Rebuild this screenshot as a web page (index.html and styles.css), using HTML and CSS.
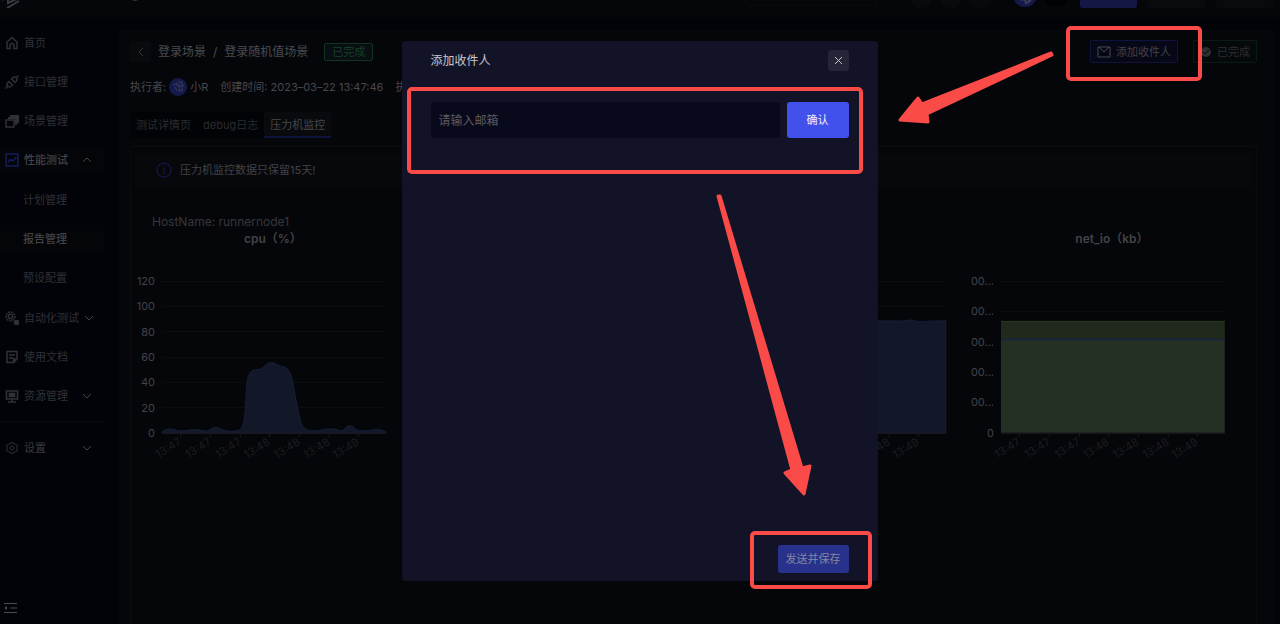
FILE: index.html
```html
<!DOCTYPE html>
<html lang="zh-CN">
<head>
    <meta charset="UTF-8">
    <meta name="viewport" content="width=device-width, initial-scale=1.0">
    <title>压力机监控</title>
    <link rel="stylesheet" href="styles.css">
</head>
<body>
    <header class="topbar">
        <svg class="logo" width="22" height="24" viewBox="0 0 22 24" fill="none">
            <path d="M0 11l4 5" stroke="#1b2068" stroke-width="3"/>
            <path d="M8 8v11l11-5M7 24l12-7" stroke="#3a3b40" stroke-width="2"/>
        </svg>
        <span class="coin"></span>
        <span class="search"></span>
        <div class="tools">
            <span class="dot"></span>
            <span class="dot"></span>
            <span class="dot"></span>
        </div>
        <div class="users">
            <svg class="face" width="25" height="25" viewBox="0 0 25 25">
                <circle cx="12" cy="12" r="12" fill="#151a4d"/>
                <path d="M8 17l4-1 1 5M13 15l4 3-3 2" fill="none" stroke="#3c3e52" stroke-width="2"/>
            </svg>
            <span class="dot black"></span>
        </div>
        <div class="top-actions">
            <span class="block primary"></span>
            <span class="block"></span>
            <span class="block"></span>
        </div>
    </header>

    <div class="layout">
        <nav class="sidebar">
            <a class="item" href="#">
                <svg class="icon" viewBox="0 0 14 14"><path d="M2 6l5-4.500 5 4.500v6.500H9V9.500a2 2 0 0 0-4 0v3H2z"/></svg>
                <span>首页</span>
            </a>
            <a class="item" href="#">
                <svg class="icon" viewBox="0 0 14 14"><path d="M0.500 13.500L2.500 11.500M11.500 2.500l2-2M4 6.500l3.500 3.500-1.200 1.200a2.400 2.400 0 0 1-3.500-3.500zM6.500 4l3.500 3.500 1.200-1.200a2.400 2.400 0 0 0-3.500-3.500z"/></svg>
                <span>接口管理</span>
            </a>
            <a class="item" href="#">
                <svg class="icon" viewBox="0 0 14 14"><path d="M1 6h8v7H1z"/><path d="M3 4h8v7M5 2h8v7" stroke-width="2.200"/></svg>
                <span>场景管理</span>
            </a>
            <a class="item active" href="#">
                <svg class="icon blue" viewBox="0 0 14 14"><path d="M1 1h12v12H1zM3 9.500l2.500-3 2.500 1.500L11.500 4"/></svg>
                <span>性能测试</span>
                <svg class="chevron" viewBox="0 0 10 6"><path d="M1 5l4-4 4 4"/></svg>
            </a>
            <div class="submenu">
                <a class="item sub" href="#">计划管理</a>
                <a class="item sub current" href="#">报告管理</a>
                <a class="item sub" href="#">预设配置</a>
            </div>
            <a class="item" href="#">
                <svg class="icon" viewBox="0 0 14 14"><circle cx="5.500" cy="5.500" r="4.500" stroke-dasharray="2 1"/><circle cx="5.500" cy="5.500" r="2.200"/><circle cx="11.500" cy="11.500" r="2" fill="#303136"/></svg>
                <span>自动化测试</span>
                <svg class="chevron" viewBox="0 0 10 6"><path d="M1 1l4 4 4-4"/></svg>
            </a>
            <a class="item" href="#">
                <svg class="icon" viewBox="0 0 14 14"><path d="M2 1.500h10v7.500l-3.500 3.500H2zM4 5h6M4 8h4M12 9H8.500v3.500" stroke-width="1.600"/></svg>
                <span>使用文档</span>
            </a>
            <a class="item" href="#">
                <svg class="icon" viewBox="0 0 14 14"><path d="M1.500 2h11v8h-11zM7 10v3M3 13h8" stroke-width="1.600"/><path d="M4.500 4.500h5v3h-5z" fill="#303136"/></svg>
                <span>资源管理</span>
                <svg class="chevron" viewBox="0 0 10 6"><path d="M1 1l4 4 4-4"/></svg>
            </a>
            <hr class="divider">
            <a class="item settings" href="#">
                <svg class="icon" viewBox="0 0 14 14"><path d="M7 1.500l5 2.700v5.600L7 12.500 2 9.800V4.200z" stroke-width="1"/><circle cx="7" cy="7" r="2" stroke-width="1"/></svg>
                <span>设置</span>
                <svg class="chevron" viewBox="0 0 10 6"><path d="M1 1l4 4 4-4"/></svg>
            </a>
            <button class="collapse" type="button" aria-label="收起">
                <svg width="14" height="12" viewBox="0 0 14 12"><path d="M0 1.500h13M6 6h7M0 10.500h13" stroke="#4a4a4c"/><path d="M3 4v4L0 6z" fill="#4a4a4c"/></svg>
            </button>
        </nav>

        <main class="main">
            <div class="head">
                <button class="back" type="button" aria-label="返回">
                    <svg width="6" height="10" viewBox="0 0 6 10"><path d="M5 1L1 5l4 4" fill="none" stroke="#36373b"/></svg>
                </button>
                <h1 class="crumbs"><span>登录场景</span><span>/</span><span>登录随机值场景</span></h1>
                <span class="tag">已完成</span>
                <div class="head-actions">
                    <button class="mail" type="button">
                        <svg width="14" height="12" viewBox="0 0 14 12"><path d="M1 1h12v10H1zM2 1l5 5 5-5" fill="none" stroke="#47474d"/></svg>
                        添加收件人
                    </button>
                    <button class="done" type="button">
                        <svg width="12" height="12" viewBox="0 0 12 12"><circle cx="6" cy="6" r="5" fill="#2d2e31"/><path d="M3 6l2 2 4-4" fill="none" stroke="#05060a"/></svg>
                        已完成
                    </button>
                </div>
            </div>
            <div class="meta">
                <span class="runner">执行者:
                    <svg width="18" height="18" viewBox="0 0 18 18"><circle cx="9" cy="9" r="9" fill="#151a4d"/><path d="M4 7l4-2v3M6 9l2 4M9 4h4v3l2 1M9 8h4v5h-3M10 6v7" fill="none" stroke="#3c3e55"/></svg>
                    小R
                </span>
                <span>创建时间: 2023–03–22 13:47:46</span>
                <span>执</span>
            </div>
            <div class="tabs">
                <button class="tab" type="button">测试详情页</button>
                <button class="tab" type="button">debug日志</button>
                <button class="tab selected" type="button">压力机监控</button>
            </div>
            <section class="panel">
                <div class="notice">
                    <svg width="16" height="16" viewBox="0 0 16 16"><circle cx="8" cy="8" r="7" fill="none" stroke="#151b59"/><path d="M8 4v1M8 6v6" stroke="#151b59"/></svg>
                    压力机监控数据只保留15天!
                </div>
                <p class="host">HostName: runnernode1</p>
                <div class="charts">
                    <svg class="chart" viewBox="0 0 280 230">
                        <defs>
                            <g id="times">
                                <path class="axis" d="M28 203.500h224M46.500 204v3M76.500 204v3M106.500 204v3M135.500 204v3M165.500 204v3M195.500 204v3M224.500 204v3"/>
                                <g class="time">
                                    <text transform="translate(48 214) rotate(-32)">13:47</text>
                                    <text transform="translate(78 214) rotate(-32)">13:47</text>
                                    <text transform="translate(108 214) rotate(-32)">13:47</text>
                                    <text transform="translate(137 214) rotate(-32)">13:48</text>
                                    <text transform="translate(167 214) rotate(-32)">13:48</text>
                                    <text transform="translate(197 214) rotate(-32)">13:48</text>
                                    <text transform="translate(226 214) rotate(-32)">13:49</text>
                                </g>
                            </g>
                            <path id="lines" class="grid" d="M28 51.500h224M28 76.500h224M28 101.500h224M28 127.500h224M28 152.500h224M28 177.500h224"/>
                        </defs>
                        <text class="title" x="139" y="13">cpu（%）</text>
                        <use href="#lines"/>
                        <g class="value">
                            <text x="21" y="55">120</text>
                            <text x="21" y="80">100</text>
                            <text x="21" y="106">80</text>
                            <text x="21" y="131">60</text>
                            <text x="21" y="156">40</text>
                            <text x="21" y="182">20</text>
                            <text x="21" y="207">0</text>
                        </g>
                        <path class="area" d="M28 202C32 199 38 198 44 201C52 202 56 199 64 200S72 202 76 200C80 197 84 197 88 200C94 202 100 202 106 200C115 193 109 149 117 142C122 137 124 143 130 137C136 130 140 133 146 136C151 138 153 136 157 145C160 155 160 162 164 178C167 197 170 202 182 201C192 200 198 197 206 201C211 202 211 196 216 196S221 201 226 201C236 202 244 197 252 202V203H28z"/>
                        <use href="#times"/>
                    </svg>
                    <svg class="chart" viewBox="0 0 280 230">
                        <use href="#lines"/>
                        <use href="#times"/>
                    </svg>
                    <svg class="chart" viewBox="0 0 280 230">
                        <use href="#lines"/>
                        <path class="area" d="M28 91H210Q216 89 222 91T236 91H252V203H28z"/>
                        <use href="#times"/>
                    </svg>
                    <svg class="chart" viewBox="0 0 280 230">
                        <text class="title" x="139" y="13">net_io（kb）</text>
                        <path class="grid" d="M28 51.500h224M28 81.500h224"/>
                        <g class="value">
                            <text x="21" y="55">00...</text>
                            <text x="21" y="85">00...</text>
                            <text x="21" y="116">00...</text>
                            <text x="21" y="146">00...</text>
                            <text x="21" y="176">00...</text>
                            <text x="21" y="207">0</text>
                        </g>
                        <path d="M28 91h224v19H28z" fill="#20291b"/>
                        <path d="M28 110h224v93H28z" fill="#233023"/>
                        <path d="M28 91.500h224" stroke="#283a20"/>
                        <path d="M28 109.500h224" stroke="#1a253b" stroke-width="2"/>
                        <use href="#times"/>
                    </svg>
                </div>
            </section>
        </main>
    </div>

    <div class="mask">
        <div class="modal" role="dialog" aria-labelledby="modal-title">
            <div class="modal-head">
                <h2 id="modal-title">添加收件人</h2>
                <button class="close" type="button" aria-label="关闭">
                    <svg width="9" height="9" viewBox="0 0 9 9"><path d="M1 1l7 7M8 1L1 8" stroke="#c4c4ca"/></svg>
                </button>
            </div>
            <form class="mail-form">
                <input type="email" aria-label="邮箱" placeholder="请输入邮箱">
                <button class="confirm" type="button">确认</button>
            </form>
            <button class="send" type="button">发送并保存</button>
        </div>
    </div>

    <!-- guide arrows and frames over the page -->
    <svg class="guide" width="1280" height="624" viewBox="0 0 1280 624">
        <g fill="none" stroke="#fa4b48" stroke-width="4">
            <rect x="1068" y="28" width="132" height="51" rx="3"/>
            <rect x="409" y="89" width="452" height="83" rx="3"/>
            <rect x="752" y="533" width="118" height="54" rx="3"/>
        </g>
        <g fill="#fa4b48" stroke="#fa4b48" stroke-width="3" stroke-linejoin="round">
            <path d="M1051 53L922 104L918 98L900 120L928 122L927 114L1052 55z"/>
            <path d="M718 196L792 470L785 473L804 494L810 466L802 468L720 196z"/>
        </g>
    </svg>
</body>
</html>
```

FILE: styles.css
```css
* {
    box-sizing: border-box;
}
body {
    margin: 0;
    height: 100vh;
    display: flex;
    flex-direction: column;
    overflow: hidden;
    background: #020308;
    color: #424347;
    font-family: Inter, "Noto Sans CJK SC", sans-serif;
    font-size: 11px;
    line-height: 16px;
}
button, input {
    font: inherit;
    color: inherit;
    border: none;
    padding: 0;
    margin: 0;
}
button {
    display: flex;
    align-items: center;
    justify-content: center;
    background: none;
    cursor: pointer;
    white-space: nowrap;
}
a {
    color: inherit;
    text-decoration: none;
}

/* top bar */
.topbar {
    flex: none;
    height: 17px;
    padding: 0 7px 9px 0;
    display: flex;
    align-items: flex-end;
    overflow: hidden;
    background: #05060a;
}
.coin {
    width: 12px;
    height: 12px;
    margin: 0 0 7px 107px;
    border-radius: 50%;
    background: #3a2d18;
}
.search {
    width: 132px;
    height: 28px;
    margin-left: auto;
    margin-bottom: 2px;
    border: 1px solid #0a0b0f;
    border-radius: 3px;
}
.tools {
    display: flex;
    gap: 6px;
    margin-left: 32px;
}
.users {
    display: flex;
    gap: 6px;
    margin-left: 20px;
}
.dot {
    width: 24px;
    height: 24px;
    border-radius: 50%;
    background: #090a0e;
}
.black {
    background: #010205;
}
.top-actions {
    display: flex;
    gap: 11px;
    margin-left: 12px;
}
.block {
    width: 57px;
    height: 28px;
    border-radius: 3px;
    background: #090a0e;
}
.primary {
    background: #131745;
}

.layout {
    flex: 1;
    min-height: 0;
    display: flex;
}

/* side menu */
.sidebar {
    flex: none;
    width: 104px;
    padding: 12px 0 9px;
    display: flex;
    flex-direction: column;
    gap: 12px;
    color: #303136;
}
.item {
    height: 27px;
    padding: 0 12px 0 5px;
    display: flex;
    align-items: center;
    gap: 5px;
    white-space: nowrap;
}
.active, .current {
    background: #040509;
    color: #424347;
    font-weight: 500;
}
.submenu {
    display: flex;
    flex-direction: column;
    gap: 12px;
    margin: 1px 0;
}
.sub {
    padding-left: 23px;
}
.settings {
    color: #3a3b3f;
}
.icon {
    flex: none;
    width: 14px;
    height: 14px;
    fill: none;
    stroke: #303136;
    stroke-width: 1.5;
}
.blue {
    stroke: #171c5c;
}
.chevron {
    flex: none;
    width: 10px;
    height: 6px;
    margin-left: auto;
    fill: none;
    stroke: #424347;
}
.divider {
    width: 100%;
    height: 1px;
    margin: 0;
    border: none;
    background: #0a0b0f;
}
.collapse {
    width: 14px;
    height: 14px;
    margin: auto 0 0 4px;
}

/* report page */
.main {
    flex: 1;
    min-width: 0;
    margin: 13px 6px 0 15px;
    padding: 10px 17px 0 11px;
    display: flex;
    flex-direction: column;
    background: #05060a;
}
.head {
    display: flex;
    align-items: center;
    height: 23px;
}
.back {
    width: 21px;
    height: 21px;
    border-radius: 3px;
    background: #090a0e;
}
.crumbs {
    display: flex;
    gap: 7px;
    margin: 0 16px 0 7px;
    font-size: 12px;
    font-weight: 400;
    color: #4a4b4f;
}
.tag {
    padding: 0 7px;
    border: 1px solid #12331f;
    border-radius: 2px;
    background: #080e11;
    color: #17412a;
}
.head-actions {
    display: flex;
    gap: 15px;
    margin-left: auto;
}
.mail, .done {
    width: 88px;
    height: 23px;
    gap: 5px;
    border: 1px solid #10133f;
    border-radius: 2px;
    background: #070817;
    color: #424347;
}
.done {
    width: 64px;
    border-color: #0a1b15;
    background: #05090b;
    color: #2d2e31;
}
.meta {
    display: flex;
    align-items: center;
    gap: 12px;
    height: 18px;
    margin-top: 15px;
    color: #47484c;
}
.runner {
    display: flex;
    align-items: center;
    gap: 3px;
}
.tabs {
    align-self: flex-start;
    display: flex;
    margin-top: 16px;
    background: #020307;
    color: #2b2c30;
}
.tab {
    height: 26px;
    padding: 0 6px;
}
.selected {
    background: #090a0e;
    box-shadow: inset 0 -2px #0d1438;
    color: #47484c;
}
.panel {
    flex: 1;
    margin-top: 8px;
    padding: 7px 3px 0;
    border: 1px solid #0b0c10;
    border-bottom: none;
    border-radius: 2px 2px 0 0;
}
.notice {
    display: flex;
    align-items: center;
    gap: 8px;
    height: 32px;
    padding: 0 22px;
    background: #07080c;
}
.host {
    margin: 28px 0 0 18px;
    font-size: 12px;
    color: #36373b;
}
.charts {
    display: grid;
    grid-template-columns: repeat(4, 1fr);
}
.chart {
    display: block;
    width: 100%;
    overflow: visible;
}
.title {
    fill: #424347;
    font-size: 12px;
    font-weight: 600;
    text-anchor: middle;
}
.value {
    fill: #424347;
    text-anchor: end;
}
.time {
    fill: #1c1d21;
    text-anchor: end;
}
.grid {
    stroke: #0e0f12;
}
.axis {
    stroke: #1b1c20;
}
.area {
    fill: #131829;
    stroke: #171e38;
    stroke-width: 1;
}

/* dialog */
.mask {
    position: fixed;
    inset: 0;
    padding: 0 1px 2px 0;
    display: grid;
    place-items: center;
}
.modal {
    width: 476px;
    height: calc(100vh - 84px);
    padding: 9px 29px 8px;
    display: flex;
    flex-direction: column;
    border-radius: 4px;
    background: #131328;
}
.modal-head {
    display: flex;
    align-items: center;
    justify-content: space-between;
}
.modal-head h2 {
    margin: 0;
    font-size: 12px;
    font-weight: 400;
    color: #c8c8ce;
}
.close {
    width: 21px;
    height: 21px;
    border-radius: 3px;
    background: #252538;
}
.mail-form {
    display: flex;
    gap: 7px;
    margin-top: 31px;
}
.mail-form input {
    flex: 1;
    min-width: 0;
    height: 36px;
    padding: 0 8px;
    border-radius: 3px;
    background: #08091b;
    color: #c8c8ce;
    font-size: 12px;
}
.mail-form input::placeholder {
    color: #5c5c62;
}
.confirm {
    width: 62px;
    height: 36px;
    border-radius: 3px;
    background: #4250ec;
    color: #f0f0fa;
}
.send {
    width: 71px;
    height: 28px;
    margin: auto 0 0 auto;
    border-radius: 3px;
    background: #28318c;
    color: #85889f;
}

.guide {
    position: absolute;
    top: 0;
    left: 0;
    pointer-events: none;
}
```
